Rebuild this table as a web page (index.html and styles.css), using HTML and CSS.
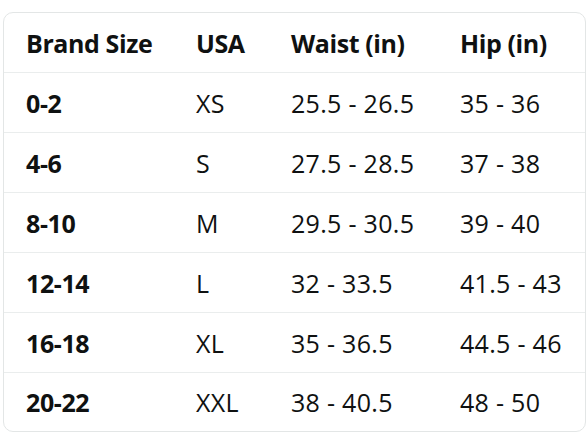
FILE: index.html
```html
<!DOCTYPE html>
<html>
<head>
<meta charset="utf-8">
<link rel="stylesheet" href="styles.css">
</head>
<body>
<div class="card">
  <div class="row head"><div>Brand Size</div><div>USA</div><div>Waist (in)</div><div>Hip (in)</div></div>
  <div class="row"><div class="b">0-2</div><div>XS</div><div>25.5 - 26.5</div><div>35 - 36</div></div>
  <div class="row"><div class="b">4-6</div><div>S</div><div>27.5 - 28.5</div><div>37 - 38</div></div>
  <div class="row"><div class="b">8-10</div><div>M</div><div>29.5 - 30.5</div><div>39 - 40</div></div>
  <div class="row"><div class="b">12-14</div><div>L</div><div>32 - 33.5</div><div>41.5 - 43</div></div>
  <div class="row"><div class="b">16-18</div><div>XL</div><div>35 - 36.5</div><div>44.5 - 46</div></div>
  <div class="row last"><div class="b">20-22</div><div>XXL</div><div>38 - 40.5</div><div>48 - 50</div></div>
</div>
</body>
</html>
```
FILE: styles.css
```css
html, body { margin: 0; padding: 0; background: #fff; }
body { font-family: "Open Sans", "Noto Sans", sans-serif; color: #0f1111; font-size: 25px; letter-spacing: 0.3px; }
.card {
  margin: 12px 0 0 3px;
  width: 581px;
  border: 1px solid #e3e6e6;
  border-radius: 10px;
  overflow: hidden;
}
.row {
  display: grid;
  grid-template-columns: 170px 95px 169px 1fr;
  height: 59px;
  align-items: center;
  border-bottom: 1px solid #eaeded;
}
.row.last { border-bottom: none; height: 58px; }
.row > div { padding-left: 22px; white-space: nowrap; }
.head, .b { font-weight: 700; letter-spacing: -0.4px; }
```
